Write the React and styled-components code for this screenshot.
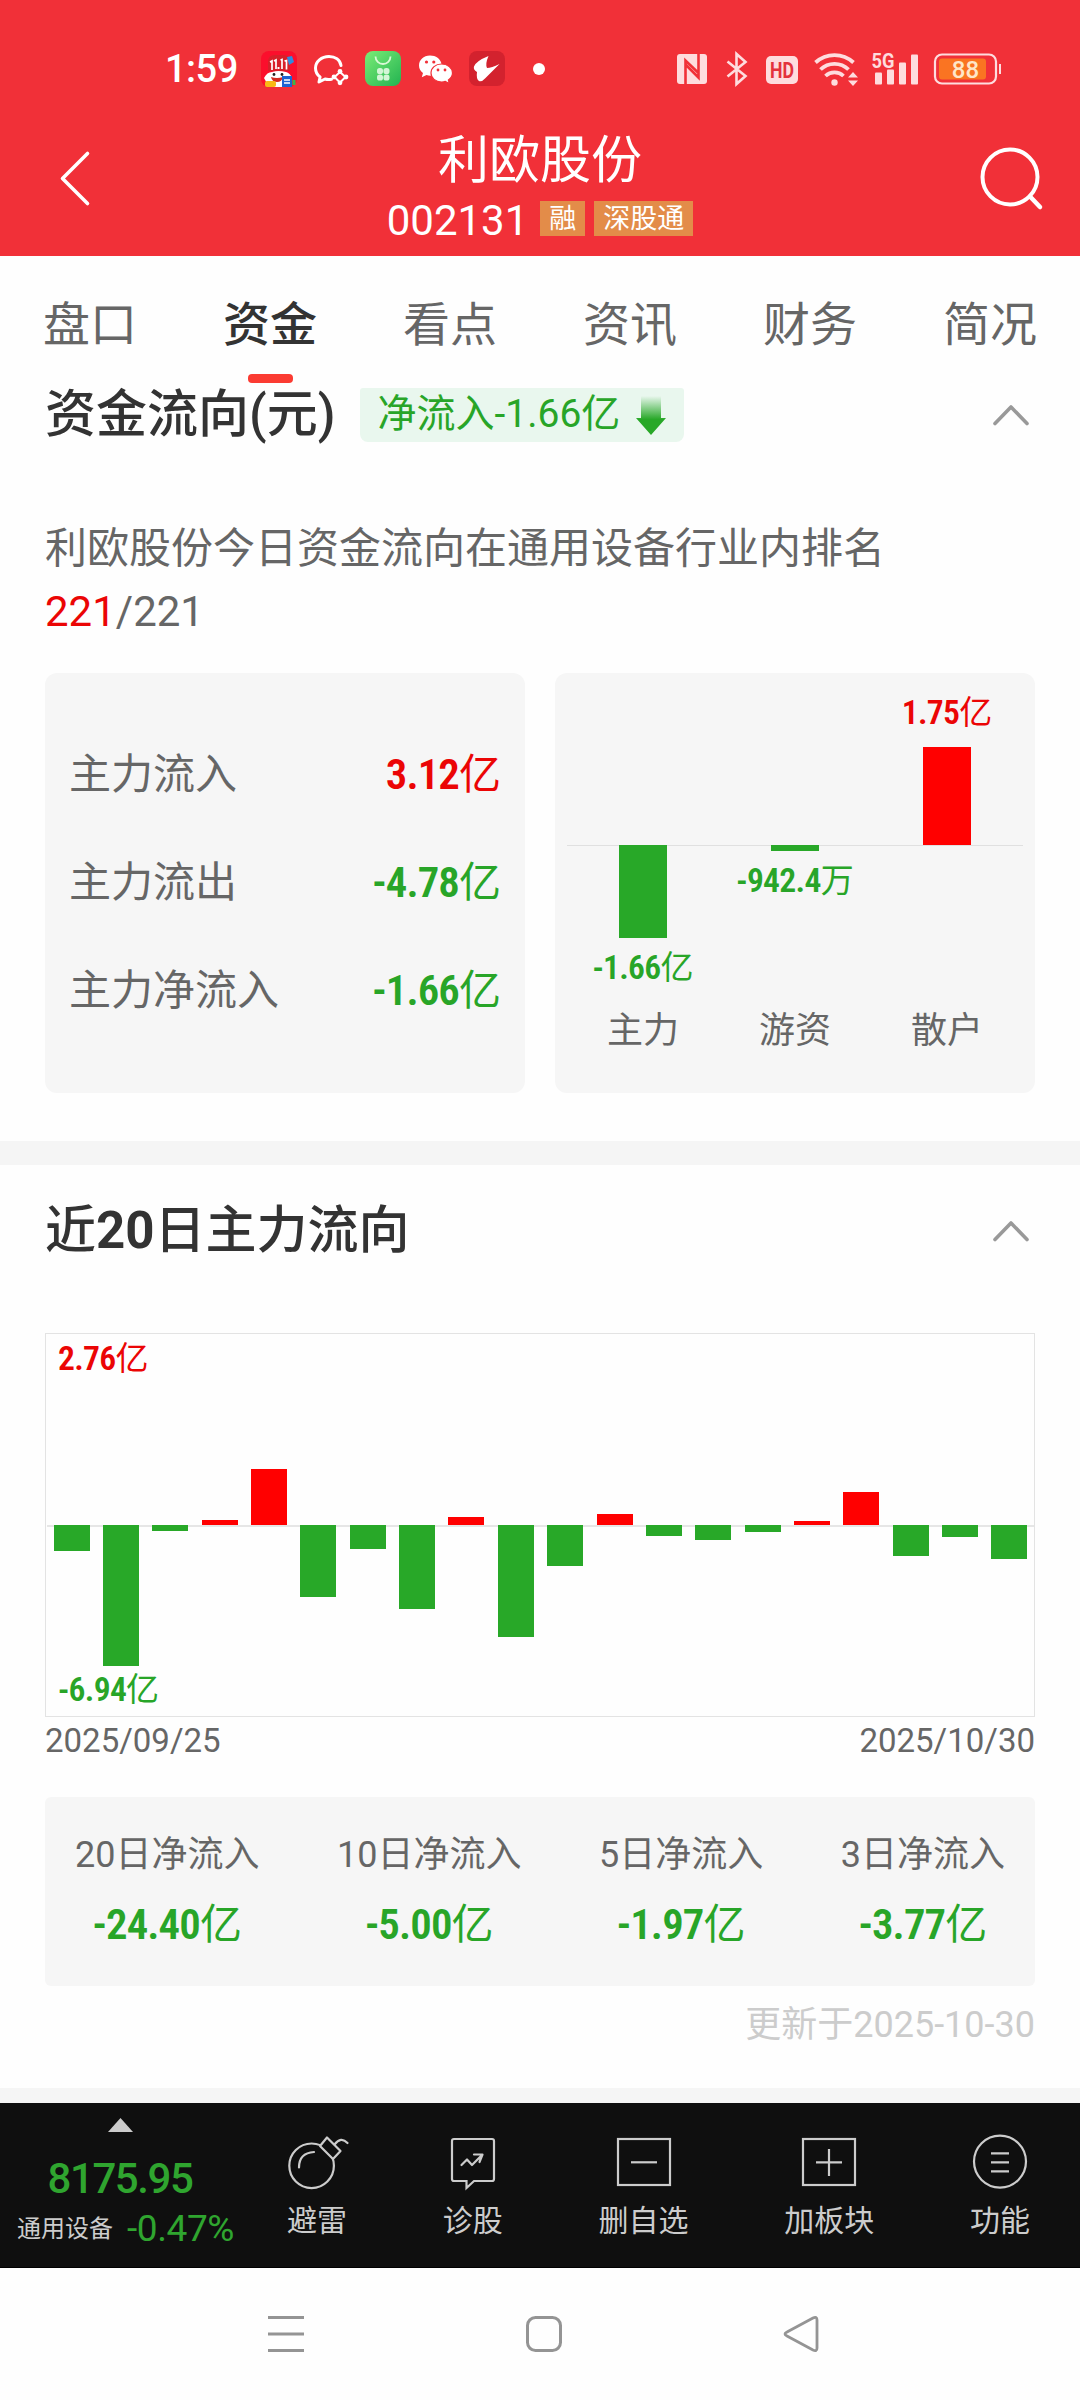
import styled, { createGlobalStyle } from "styled-components";

const RED = "#eb0505";
const GREEN = "#28a528";

const GlobalStyle = createGlobalStyle`
  * {
    box-sizing: border-box;
    margin: 0;
    padding: 0;
  }

  body {
    width: 1080px;
    background-color: #fefefe;
    color: #666;
    font-family: Roboto, "Noto Sans CJK SC", sans-serif;
  }

  svg {
    display: block;
    flex: none;
    overflow: visible;
  }
`;

const Page = styled.div`
  display: flex;
  flex-direction: column;
  width: 1080px;
  height: 2400px;
  overflow: hidden;
`;

/* ---------- top ---------- */

const TopArea = styled.header`
  height: 256px;
  background-color: #f13038;
  color: #fff;
`;

const StatusBar = styled.div`
  display: flex;
  justify-content: space-between;
  align-items: center;
  height: 86px;
  padding: 51px 79px 0 165px;
`;

const StatusGroup = styled.div`
  display: flex;
  align-items: center;
  gap: 16px;
`;

const Clock = styled.span`
  width: 80px;
  padding-top: 2px;
  font-size: 38px;
  font-weight: 500;
  line-height: 35px;
  letter-spacing: -0.5px;
`;

const Dot = styled.span`
  width: 12px;
  height: 12px;
  margin-left: 12px;
  border-radius: 50%;
  background-color: #fff;
`;

const TitleBar = styled.div`
  display: flex;
  justify-content: space-between;
  align-items: flex-start;
  height: 170px;
  padding: 0 37px 0 58px;
`;

const BackButton = styled.button`
  width: 43px;
  padding-top: 65px;
  border: none;
  background: none;
`;

const SearchButton = styled(BackButton)`
  width: 64px;
  padding-top: 59px;
`;

const StockTitle = styled.div`
  display: flex;
  flex-direction: column;
  align-items: center;
  padding-top: 44px;
`;

const StockName = styled.h1`
  font-size: 51px;
  font-weight: 400;
  line-height: 62px;
`;

const StockMeta = styled.div`
  display: flex;
  align-items: center;
  height: 35px;
  margin-top: 9px;
  font-size: 42px;
  line-height: 37px;
`;

const StockCode = styled.span`
  padding-top: 3px;
`;

const Tag = styled.span`
  height: 35px;
  margin-left: ${(props) => props.$gap}px;
  padding: 0 9px;
  background-color: #e38c49;
  font-size: 27px;
  line-height: 37px;
`;

/* ---------- tabs ---------- */

const Tabs = styled.nav`
  display: grid;
  grid-template-columns: repeat(6, 1fr);
  height: 127px;
  padding-top: 38px;
`;

const Tab = styled.div`
  display: flex;
  flex-direction: column;
  align-items: center;
  justify-content: space-between;
  font-size: 47px;
  font-weight: ${(props) => (props.$active ? 500 : 400)};
  line-height: 62px;
  color: ${(props) => (props.$active ? "#333" : "#666")};
`;

const TabMark = styled.span`
  width: 45px;
  height: 9px;
  border-radius: 4px;
  background-color: #fb3b32;
`;

/* ---------- sections ---------- */

const SectionHead = styled.div`
  display: flex;
  align-items: center;
  height: 64px;
  margin-top: ${(props) => props.$top || 0}px;
  padding: 0 51px 0 45px;
`;

const SectionTitle = styled.h2`
  font-size: 51px;
  font-weight: 500;
  line-height: 64px;
  color: #333;

  b {
    font-weight: 700;
  }
`;

const FlowBadge = styled.div`
  display: flex;
  align-items: center;
  height: 54px;
  margin-left: 24px;
  padding: 0 18px 0 18px;
  border-radius: 3px 3px 8px 8px;
  background-color: #e9f7ee;
  color: ${GREEN};
  font-size: 39px;
  line-height: 52px;
  gap: 16px;
`;

const FlowBadgeText = styled.span`
  height: 54px;
`;

const ChevronBox = styled.div`
  margin-left: auto;
`;

const Rank = styled.p`
  height: 126px;
  margin: 70px 45px 30px;
  font-size: 42px;
  line-height: 63px;
`;

const RankNow = styled.span`
  color: ${RED};
`;

const Cards = styled.div`
  display: grid;
  grid-template-columns: 1fr 1fr;
  gap: 30px;
  height: 420px;
  padding: 0 45px;
`;

const Card = styled.div`
  border-radius: 12px;
  background-color: #f6f6f6;
`;

const FlowList = styled(Card)`
  display: flex;
  flex-direction: column;
  padding: 48px 24px 0;
`;

const FlowRow = styled.div`
  display: flex;
  justify-content: space-between;
  align-items: center;
  height: 108px;
  font-size: 42px;
  line-height: 50px;
`;

const AmountText = styled.span`
  display: inline-flex;
  align-items: baseline;
  justify-content: center;
  font-size: ${(props) => props.$size}px;
  line-height: 1.2;
  color: ${(props) => (props.$up ? RED : GREEN)};
  white-space: nowrap;
`;

const Digits = styled.span`
  font-size: 1.02em;
  font-weight: 600;
  font-stretch: condensed;
  line-height: 1;
  letter-spacing: -0.021em;
`;

const TypeChart = styled(Card)`
  display: grid;
  grid-template-columns: repeat(3, 1fr);
  grid-template-rows: 172px 154px 64px;
  padding: 0 12px;
`;

const UpCell = styled.div`
  display: flex;
  flex-direction: column;
  align-items: center;
  justify-content: flex-end;
  gap: 14px;
`;

const DownCell = styled.div`
  display: flex;
  flex-direction: column;
  align-items: center;
  border-top: 1px solid #e0e0e0;
  gap: 10px;
`;

const TypeBar = styled.div`
  width: 48px;
  height: ${(props) => props.$height}px;
  margin-top: ${(props) => (props.$up ? 0 : -1)}px;
  background-color: ${(props) => (props.$up ? "#ff0000" : "#28a828")};
`;

const TypeName = styled.div`
  font-size: 36px;
  line-height: 64px;
  text-align: center;
`;

const Divider = styled.div`
  height: ${(props) => props.$height}px;
  margin-top: ${(props) => props.$top}px;
  background-color: #f5f5f5;
`;

/* ---------- 20 day chart ---------- */

const DayChart = styled.div`
  position: relative;
  height: 384px;
  margin: 70px 45px 0;
  padding-left: 1px;
  border: 1px solid #e3e3e3;
`;

const DayColumns = styled.div`
  display: grid;
  grid-template-columns: repeat(20, 1fr);
  height: 100%;
`;

const DayColumn = styled.div`
  display: grid;
  grid-template-rows: 191px 1fr;
  justify-items: center;
`;

const DayUp = styled.div`
  display: flex;
  align-items: flex-end;
  justify-content: center;
  width: 100%;
`;

const DayDown = styled(DayUp)`
  align-items: flex-start;
  box-shadow: inset 0 2px 0 #e6e6e6;
`;

const DayBar = styled.div`
  width: 36px;
  background-color: ${(props) => (props.$up ? "#ff0000" : "#28a828")};
`;

const ChartLabel = styled.div`
  position: absolute;
  left: 12px;
  ${(props) => (props.$bottom ? "bottom: 6px" : "top: 5px")};
`;

const Dates = styled.div`
  display: flex;
  justify-content: space-between;
  height: 44px;
  margin-top: 2px;
  padding: 0 45px;
  font-size: 33px;
  line-height: 44px;
`;

const Sums = styled.div`
  display: flex;
  justify-content: space-between;
  height: 189px;
  margin: 34px 45px 0;
  padding: 28px 30px 0;
  border-radius: 6px;
  background-color: #f6f6f6;
`;

const Sum = styled.div`
  display: flex;
  flex-direction: column;
  align-items: center;
  font-size: 36px;
  line-height: 60px;
  gap: 15px;
`;

const Updated = styled.div`
  height: 62px;
  padding: 15px 45px 0;
  font-size: 36px;
  line-height: 49px;
  text-align: right;
  color: #ccc;
`;

/* ---------- bottom ---------- */

const ActionBar = styled.div`
  display: flex;
  height: 165px;
  background-color: #0f0f0f;
  border-bottom: 1px solid #000;
  color: #ccc;
`;

const Sector = styled.div`
  display: flex;
  flex-direction: column;
  align-items: center;
  width: 240px;
  padding-top: 15px;
`;

const SectorIndex = styled.div`
  height: 50px;
  margin-top: 22px;
  font-size: 42px;
  font-weight: 500;
  line-height: 50px;
  letter-spacing: -1.4px;
  color: #2fa52f;
`;

const SectorLine = styled.div`
  display: flex;
  align-items: center;
  height: 48px;
  margin: 1px 0 0 11px;
  font-size: 24px;
  line-height: 48px;
  gap: 14px;
  white-space: nowrap;
`;

const SectorRate = styled.span`
  font-size: 37px;
  letter-spacing: -0.4px;
  color: #2fa52f;
`;

const Actions = styled.div`
  display: flex;
  flex: 1;
  justify-content: space-between;
  padding: 30px 50px 0 47px;
`;

const Action = styled.div`
  display: flex;
  flex-direction: column;
  align-items: center;
  font-size: 30px;
  line-height: 40px;
  gap: 12px;
`;

const SystemNav = styled.div`
  display: flex;
  flex: 1;
  justify-content: space-between;
  padding: 48px 260px 0 267px;
`;

/* ---------- icons ---------- */

function PromoIcon() {
  return (
    <svg width="36" height="36" viewBox="0 0 36 36">
      <rect width="36" height="36" rx="8" fill="#fb0f2c" />
      <path d="M7 20V11Q7 4 14 4h8q7 0 7 7v9z" fill="#d8202a" />
      <path d="M26 6l5-1 2 6-5 3z" fill="#2f8be0" />
      <g stroke="#fff" strokeWidth="1.700" fill="none">
        <path d="M9 11l2-1v9M13 10l2-1v9M19.500 9l1.500-.500v9.500M23.500 10l2-.500v9" />
      </g>
      <rect x="16.500" y="16" width="2" height="2" fill="#fff" />
      <path d="M3 27q3-6 8-6 6-2 14 0 4 1 6 6l-3 9H8z" fill="#fff" />
      <circle cx="13" cy="23.500" r="1.400" fill="#222" />
      <circle cx="21" cy="23.500" r="1.400" fill="#222" />
      <path d="M10 26q6 2 12 0-1 5-6 5t-6-5z" fill="#d42a20" />
      <rect x="4" y="30" width="11" height="6" rx="2" fill="#f9b915" />
      <rect x="21" y="25" width="10" height="11" fill="#1c63d2" />
      <path d="M23 29h6M23 32h6" stroke="#fff" strokeWidth="1.3" />
      <rect x="31.500" y="29" width="3" height="5" fill="#3ab54a" />
    </svg>
  );
}

function WorkChatIcon() {
  return (
    <svg width="36" height="36" viewBox="0 0 36 36">
      <path
        d="M28 14.500C27 8.500 22 5.500 16 5.500 8.500 5.500 2.500 10.500 2.500 17c0 3.800 1.800 7 4.600 9L6 31l6-3q3 .8 6.500.2"
        fill="none"
        stroke="#fff"
        strokeWidth="3"
        strokeLinecap="round"
        strokeLinejoin="round"
      />
      <path d="M27 21l5.500 5-5.500 5.500-5.500-5.500z" fill="none" stroke="#fff" strokeWidth="2" />
      <g fill="#fff">
        <circle cx="27" cy="20.500" r="2.400" />
        <circle cx="33" cy="26" r="2.400" />
        <circle cx="27" cy="31.800" r="2.400" />
        <circle cx="21" cy="26" r="2.400" />
      </g>
    </svg>
  );
}

function StoreIcon() {
  return (
    <svg width="36" height="36" viewBox="0 0 36 36">
      <defs>
        <linearGradient id="store" x1="0" y1="0" x2="1" y2="1">
          <stop offset="0" stopColor="#7bec76" />
          <stop offset="1" stopColor="#22b351" />
        </linearGradient>
      </defs>
      <rect width="36" height="35" rx="8" fill="url(#store)" />
      <path d="M10.500 5.500a7.500 7.500 0 0 0 15 0" fill="none" stroke="#d9f9d6" strokeWidth="1.800" />
      <g fill="#d3f5d6">
        <rect x="12" y="17" width="6" height="6" rx="2.600" />
        <rect x="18.500" y="17" width="6" height="6" rx="2.600" />
        <rect x="12" y="23.500" width="6" height="6" rx="2.600" />
        <rect x="18.500" y="23.500" width="6" height="6" rx="2.600" />
      </g>
    </svg>
  );
}

function WeChatIcon() {
  return (
    <svg width="36" height="36" viewBox="0 0 36 36">
      <path d="M13 4.500C6.500 4.500 2 9 2 14.500c0 3.200 1.500 5.700 4 7.500l-1.200 4.200L9.500 24q2 .8 4.500.7l10.500-12C23.500 8 19 4.500 13 4.500z" fill="#fff" />
      <path
        d="M24.500 13c-6 0-10.500 4-10.500 9s4.500 9 10.500 9q2 0 3.800-.6l4 2.200-.9-3.600c2.500-1.700 4.100-4.200 4.100-7 0-5-5-9-11-9z"
        fill="#fff"
        stroke="#f13038"
        strokeWidth="1.200"
      />
      <g fill="#f13038">
        <circle cx="9.500" cy="11" r="1.600" />
        <circle cx="16.800" cy="11" r="1.600" />
        <circle cx="21" cy="19" r="1.400" />
        <circle cx="28" cy="19" r="1.400" />
      </g>
    </svg>
  );
}

function BirdIcon() {
  return (
    <svg width="36" height="36" viewBox="0 0 36 36">
      <rect width="36" height="35" rx="8" fill="#d3222e" />
      <path d="M19.500 5Q7 10 5 15.500q-1 3 3 5.500Q7 28 10 30q3 1 6-2.500L30.500 13q-8 4-12.500 4-2-4 1.500-12z" fill="#fff" />
    </svg>
  );
}

function NfcIcon() {
  return (
    <svg width="32" height="34" viewBox="0 0 32 34">
      <rect y="2" width="30" height="30" rx="3" fill="#fedcde" />
      <path
        d="M8.500 32V8.500L21.500 21M21.500 2v23.500L8.500 12.500"
        fill="none"
        stroke="#f13038"
        strokeWidth="2.600"
      />
    </svg>
  );
}

function BluetoothIcon() {
  return (
    <svg width="24" height="34" viewBox="0 0 24 34">
      <path
        d="M2.500 9.500L20.500 24l-9 8V2l9 8L2.500 24.500"
        fill="none"
        stroke="#fedcde"
        strokeWidth="2.600"
      />
    </svg>
  );
}

function HdIcon() {
  return (
    <svg width="34" height="34" viewBox="0 0 34 34">
      <rect x="1" y="4" width="32" height="28" rx="5" fill="#fedcde" />
      <text x="17" y="26" textAnchor="middle" fontSize="22" fontWeight="700" fill="#e4323c" textLength="24" lengthAdjust="spacingAndGlyphs">
        HD
      </text>
    </svg>
  );
}

function WifiIcon() {
  return (
    <svg width="43" height="34" viewBox="0 0 43 34">
      <g fill="none" stroke="#fedcde" strokeWidth="3.800">
        <path d="M0.500 10.500a28 28 0 0 1 38 0" />
        <path d="M5.500 17.500a20 20 0 0 1 28 0" />
        <path d="M10.500 24a13 13 0 0 1 18 0" />
      </g>
      <circle cx="19.500" cy="30.500" r="3.200" fill="#fedcde" />
      <path d="M33 25.500l5-5.500 5 5.500zM33 28.500l5 5.500 5-5.500z" fill="#fedcde" />
    </svg>
  );
}

function SignalIcon() {
  return (
    <svg width="44" height="34" viewBox="0 0 44 34">
      <text x="-2.500" y="15.500" fontSize="21" fontWeight="700" fill="#fedcde" textLength="23" lengthAdjust="spacingAndGlyphs">
        5G
      </text>
      <g fill="#fedcde">
        <rect x="1" y="20.500" width="7" height="12" rx="1" />
        <rect x="13" y="17.500" width="7" height="15" rx="1" />
        <rect x="25" y="10.500" width="7" height="22" rx="1" />
        <rect x="37" y="2.500" width="7" height="30" rx="1" />
      </g>
    </svg>
  );
}

function BatteryIcon() {
  return (
    <svg width="67" height="34" viewBox="0 0 67 34">
      <rect x="1" y="2.500" width="61" height="29" rx="7" fill="none" stroke="#fedcde" strokeWidth="2.200" />
      <rect x="5" y="6.500" width="47" height="21" rx="3" fill="#fa7422" />
      <path d="M66 12v10" stroke="#fedcde" strokeWidth="2" />
      <text x="31.500" y="25.500" textAnchor="middle" fontSize="24" fontWeight="500" fill="#fee6c8">
        88
      </text>
    </svg>
  );
}

function Chevron() {
  return (
    <svg width="36" height="22" viewBox="0 0 36 22">
      <path d="M2 19.500L18 3l16 16.500" fill="none" stroke="#999" strokeWidth="3.600" strokeLinecap="round" strokeLinejoin="round" />
    </svg>
  );
}

function DownArrow() {
  return (
    <svg width="30" height="39" viewBox="0 0 30 39">
      <defs>
        <linearGradient id="fade" x1="0" y1="0" x2="0" y2="1">
          <stop offset="0" stopColor="#28a828" stopOpacity="0" />
          <stop offset="0.6" stopColor="#28a828" />
        </linearGradient>
      </defs>
      <path d="M5 0h20v22h5L15 39 0 22h5z" fill="url(#fade)" />
    </svg>
  );
}

function BombIcon() {
  return (
    <svg width="60" height="56" viewBox="0 0 60 56" fill="none" stroke="#ccc" strokeWidth="2.200">
      <circle cx="24.600" cy="32.800" r="22.300" />
      <path d="M33 13l7-8.500L53.500 18l-7.500 8z" fill="#0f0f0f" strokeLinejoin="round" />
      <path d="M47.500 11.500Q54 3 60.500 10" strokeLinecap="round" />
      <path d="M12 34.500Q12 20 27 19" strokeLinecap="round" />
    </svg>
  );
}

function DiagnoseIcon() {
  return (
    <svg width="60" height="56" viewBox="0 0 60 56" fill="none" stroke="#ccc" strokeWidth="2.200">
      <path d="M11 6h38q2 0 2 2v38q0 2-2 2H31l-7.500 7V48H11q-2 0-2-2V8q0-2 2-2z" />
      <path d="M18.500 32l5.500-5.500 5 5.500L38.500 22.500M31 21.500h8.500l-3 7.500" strokeLinecap="round" strokeLinejoin="round" />
    </svg>
  );
}

function BoxIcon({ plus }) {
  return (
    <svg width="60" height="56" viewBox="0 0 60 56" fill="none" stroke="#ccc" strokeWidth="2.200">
      <rect x="4" y="6" width="52" height="46" />
      <path d={plus ? "M17 29.300h26M30 16v27" : "M17 29.300h26"} />
    </svg>
  );
}

function MoreIcon() {
  return (
    <svg width="60" height="56" viewBox="0 0 60 56" fill="none" stroke="#ccc" strokeWidth="2.200">
      <circle cx="30" cy="28.600" r="26" />
      <path d="M21 20.300h18M21 29.300h18M21 38.300h18" />
    </svg>
  );
}

/* ---------- data ---------- */

const tabs = ["盘口", "资金", "看点", "资讯", "财务", "简况"];

const flows = [
  { name: "主力流入", value: "3.12", up: true },
  { name: "主力流出", value: "-4.78" },
  { name: "主力净流入", value: "-1.66" },
];

const types = [
  { name: "主力", value: "-1.66", unit: "亿", height: 93 },
  { name: "游资", value: "-942.4", unit: "万", height: 6 },
  { name: "散户", value: "1.75", unit: "亿", height: 98, up: true },
];

const days = [
  -1.27, -6.94, -0.28, 0.24, 2.76, -3.54, -1.2, -4.14, 0.39, -5.51, -2.02, 0.54,
  -0.52, -0.72, -0.34, 0.2, 1.61, -1.55, -0.59, -1.68,
];

const sums = [
  { name: "20日净流入", value: "-24.40" },
  { name: "10日净流入", value: "-5.00" },
  { name: "5日净流入", value: "-1.97" },
  { name: "3日净流入", value: "-3.77" },
];

const actions = [
  { name: "避雷", icon: <BombIcon /> },
  { name: "诊股", icon: <DiagnoseIcon /> },
  { name: "删自选", icon: <BoxIcon /> },
  { name: "加板块", icon: <BoxIcon plus /> },
  { name: "功能", icon: <MoreIcon /> },
];

// px per 亿 in the 20 day chart
const DAY_SCALE = 20.3;

function Amount({ value, unit = "亿", size = 42, up }) {
  return (
    <AmountText $size={size} $up={up}>
      <Digits>{value}</Digits>
      {unit}
    </AmountText>
  );
}

function App() {
  return (
    <>
      <GlobalStyle />
      <Page>
        <TopArea>
          <StatusBar>
            <StatusGroup>
              <Clock>1:59</Clock>
              <PromoIcon />
              <WorkChatIcon />
              <StoreIcon />
              <WeChatIcon />
              <BirdIcon />
              <Dot />
            </StatusGroup>
            <StatusGroup>
              <NfcIcon />
              <BluetoothIcon />
              <HdIcon />
              <WifiIcon />
              <SignalIcon />
              <BatteryIcon />
            </StatusGroup>
          </StatusBar>
          <TitleBar>
            <BackButton>
              <svg width="32" height="54" viewBox="0 0 32 54">
                <path d="M29.500 2.500L4.500 27.500l25 25" fill="none" stroke="#fff" strokeWidth="3.600" strokeLinecap="round" strokeLinejoin="round" />
              </svg>
            </BackButton>
            <StockTitle>
              <StockName>利欧股份</StockName>
              <StockMeta>
                <StockCode>002131</StockCode>
                <Tag $gap={12}>融</Tag>
                <Tag $gap={9}>深股通</Tag>
              </StockMeta>
            </StockTitle>
            <SearchButton>
              <svg width="64" height="64" viewBox="0 0 64 64">
                <circle cx="31" cy="32" r="27.500" fill="none" stroke="#fff" strokeWidth="4" />
                <path d="M51 51.500l10 10.500" stroke="#fff" strokeWidth="4.500" strokeLinecap="round" />
              </svg>
            </SearchButton>
          </TitleBar>
        </TopArea>

        <Tabs>
          {tabs.map((tab) => (
            <Tab key={tab} $active={tab === "资金"}>
              {tab}
              {tab === "资金" && <TabMark />}
            </Tab>
          ))}
        </Tabs>

        <SectionHead>
          <SectionTitle>资金流向(元)</SectionTitle>
          <FlowBadge>
            <FlowBadgeText>净流入-1.66亿</FlowBadgeText>
            <DownArrow />
          </FlowBadge>
          <ChevronBox>
            <Chevron />
          </ChevronBox>
        </SectionHead>
        <Rank>
          利欧股份今日资金流向在通用设备行业内排名
          <br />
          <RankNow>221</RankNow>/221
        </Rank>
        <Cards>
          <FlowList>
            {flows.map((flow) => (
              <FlowRow key={flow.name}>
                {flow.name}
                <Amount value={flow.value} up={flow.up} />
              </FlowRow>
            ))}
          </FlowList>
          <TypeChart>
            {types.map((type) => (
              <UpCell key={type.name}>
                {type.up && (
                  <>
                    <Amount value={type.value} unit={type.unit} size={33} up />
                    <TypeBar $height={type.height} $up />
                  </>
                )}
              </UpCell>
            ))}
            {types.map((type) => (
              <DownCell key={type.name}>
                {!type.up && (
                  <>
                    <TypeBar $height={type.height} />
                    <Amount value={type.value} unit={type.unit} size={33} />
                  </>
                )}
              </DownCell>
            ))}
            {types.map((type) => (
              <TypeName key={type.name}>{type.name}</TypeName>
            ))}
          </TypeChart>
        </Cards>

        <Divider $height={24} $top={48} />

        <SectionHead $top={34}>
          <SectionTitle>
            近<b>20</b>日主力流向
          </SectionTitle>
          <ChevronBox>
            <Chevron />
          </ChevronBox>
        </SectionHead>
        <DayChart>
          <DayColumns>
            {days.map((day, i) => (
              <DayColumn key={i}>
                <DayUp>{day > 0 && <DayBar $up style={{ height: day * DAY_SCALE }} />}</DayUp>
                <DayDown>{day < 0 && <DayBar style={{ height: -day * DAY_SCALE }} />}</DayDown>
              </DayColumn>
            ))}
          </DayColumns>
          <ChartLabel>
            <Amount value="2.76" size={33} up />
          </ChartLabel>
          <ChartLabel $bottom>
            <Amount value="-6.94" size={33} />
          </ChartLabel>
        </DayChart>
        <Dates>
          <span>2025/09/25</span>
          <span>2025/10/30</span>
        </Dates>
        <Sums>
          {sums.map((sum) => (
            <Sum key={sum.name}>
              {sum.name}
              <Amount value={sum.value} />
            </Sum>
          ))}
        </Sums>
        <Updated>更新于2025-10-30</Updated>

        <Divider $height={15} $top={40} />

        <ActionBar>
          <Sector>
            <svg width="25" height="14" viewBox="0 0 25 14">
              <path d="M12.500 0L25 14H0z" fill="#ccc" />
            </svg>
            <SectorIndex>8175.95</SectorIndex>
            <SectorLine>
              通用设备
              <SectorRate>-0.47%</SectorRate>
            </SectorLine>
          </Sector>
          <Actions>
            {actions.map((action) => (
              <Action key={action.name}>
                {action.icon}
                {action.name}
              </Action>
            ))}
          </Actions>
        </ActionBar>

        <SystemNav>
          <svg width="38" height="36" viewBox="0 0 38 36">
            <path d="M1 1.500h36M1 18h36M1 34.500h36" stroke="#949494" strokeWidth="3" />
          </svg>
          <svg width="36" height="36" viewBox="0 0 36 36">
            <rect x="0.500" y="1.500" width="33" height="33" rx="8" fill="none" stroke="#949494" strokeWidth="3" />
          </svg>
          <svg width="36" height="36" viewBox="0 0 36 36">
            <path d="M3 16L29 2q4-2 4 2v28q0 4-4 2L3 20q-4-2 0-4z" fill="none" stroke="#949494" strokeWidth="2.800" />
          </svg>
        </SystemNav>
      </Page>
    </>
  );
}

export default App;
